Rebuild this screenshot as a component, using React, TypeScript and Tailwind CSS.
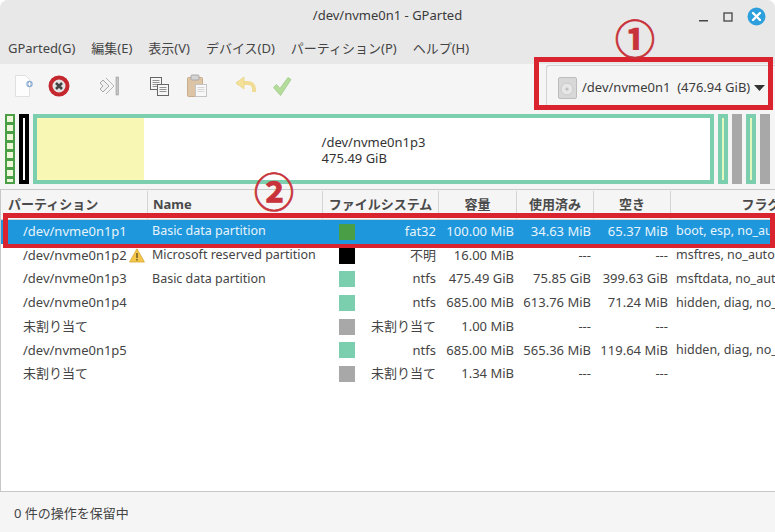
const font = { fontFamily: '"Noto Sans", "Noto Sans CJK JP", sans-serif' };

const rows = [
  { p: "/dev/nvme0n1p1", warn: false, n: "Basic data partition", c: "bg-[#4a9e45]", fs: "fat32", size: "100.00 MiB", used: "34.63 MiB", free: "65.37 MiB", flags: "boot, esp, no_automount" },
  { p: "/dev/nvme0n1p2", warn: true, n: "Microsoft reserved partition", c: "bg-black", fs: "不明", size: "16.00 MiB", used: "---", free: "---", flags: "msftres, no_automount" },
  { p: "/dev/nvme0n1p3", warn: false, n: "Basic data partition", c: "bg-[#7bcfae]", fs: "ntfs", size: "475.49 GiB", used: "75.85 GiB", free: "399.63 GiB", flags: "msftdata, no_automount" },
  { p: "/dev/nvme0n1p4", warn: false, n: "", c: "bg-[#7bcfae]", fs: "ntfs", size: "685.00 MiB", used: "613.76 MiB", free: "71.24 MiB", flags: "hidden, diag, no_automount" },
  { p: "未割り当て", warn: false, n: "", c: "bg-[#a8a8a8]", fs: "未割り当て", size: "1.00 MiB", used: "---", free: "---", flags: "" },
  { p: "/dev/nvme0n1p5", warn: false, n: "", c: "bg-[#7bcfae]", fs: "ntfs", size: "685.00 MiB", used: "565.36 MiB", free: "119.64 MiB", flags: "hidden, diag, no_automount" },
  { p: "未割り当て", warn: false, n: "", c: "bg-[#a8a8a8]", fs: "未割り当て", size: "1.34 MiB", used: "---", free: "---", flags: "" },
];

const cols = "grid grid-cols-[147px_175px_116px_78px_77px_77px_180px]";

function Head({ label, last }: { label: string; last?: boolean }) {
  return (
    <div className={`flex items-center justify-center font-bold text-[13px] text-[#4a4a4a] whitespace-nowrap overflow-hidden ${last ? "" : "border-r border-[#d4d4d4]"}`}>
      {label}
    </div>
  );
}

function Bar({ w, inner }: { w: string; inner: string }) {
  return (
    <div className={`${w} shrink-0 h-full bg-[#7bcfae] p-[4px]`}>
      <div className={`w-full h-full ${inner}`} />
    </div>
  );
}

export default function App() {
  return (
    <div style={font} className="relative w-[775px] h-[532px] overflow-hidden bg-[#f5f5f5] text-[#3c3c3c] flex flex-col rounded-t-[8px]">
      {/* Title bar */}
      <div className="relative h-[34px] shrink-0 bg-[#e8e8e8] flex items-center justify-center pb-[2px] text-[13px] text-[#3a3a3a]">
        /dev/nvme0n1 - GParted
        <div className="absolute right-[9px] top-[7px] flex items-center gap-[14px]">
          <svg width="10" height="18" viewBox="0 0 10 18"><rect x="0" y="12" width="9" height="1.5" fill="#444" /></svg>
          <svg width="10" height="18" viewBox="0 0 10 18"><rect x="1" y="5" width="8" height="8" fill="none" stroke="#444" strokeWidth="1.3" /></svg>
          <svg width="19" height="19" viewBox="0 0 19 19"><circle cx="9.5" cy="9.5" r="9" fill="#2d9fdc" /><path d="M6 6l7 7M13 6l-7 7" stroke="#fff" strokeWidth="2.4" strokeLinecap="round" /></svg>
        </div>
      </div>
      {/* Menu bar */}
      <div className="h-[30px] shrink-0 bg-[#e8e8e8] flex items-center pl-[8px] gap-[16px] text-[13px] text-[#444]">
        <span>GParted(G)</span>
        <span>編集(E)</span>
        <span>表示(V)</span>
        <span>デバイス(D)</span>
        <span>パーティション(P)</span>
        <span>ヘルプ(H)</span>
      </div>
      {/* Toolbar */}
      <div className="h-[46px] shrink-0 flex items-center pl-[14px] pb-[2px]">
        <svg className="mr-[13px]" width="21" height="24" viewBox="0 0 21 24">
          <path d="M1.5 1.5h10l4 4v17h-14z" fill="#fdfdfd" stroke="#e0e0e0" />
          <circle cx="15.5" cy="10" r="3.2" fill="#8fb0d4" />
          <path d="M13.5 10h4M15.5 8v4" stroke="#fff" strokeWidth="1" />
        </svg>
        <svg className="mr-[28px]" width="22" height="22" viewBox="0 0 22 22">
          <circle cx="11" cy="11" r="8.5" fill="#e4e4e4" stroke="#c4282e" strokeWidth="4" />
          <path d="M8 8l6 6M14 8l-6 6" stroke="#444" strokeWidth="2.6" />
        </svg>
        <svg className="mr-[28px]" width="22" height="22" viewBox="0 0 22 22" fill="none">
          <path d="M2 8l3-3 6 6-6 6-3-3 3-3z" stroke="#a8a8a8" fill="#f0f0f0" />
          <path d="M8 3l8 8-8 8" stroke="#b4b4b4" />
          <rect x="18" y="2" width="2.5" height="18" fill="#c4c4c4" stroke="#999" strokeWidth="0.6" />
        </svg>
        <svg className="mr-[16px]" width="22" height="22" viewBox="0 0 22 22" fill="none">
          <rect x="2.5" y="2.5" width="11" height="12" fill="#f6f6f6" stroke="#666" />
          <path d="M4.5 5.5h7M4.5 7.5h7M4.5 9.5h7M4.5 11.5h5" stroke="#777" strokeWidth=".8" />
          <rect x="9.5" y="9.5" width="11" height="11" fill="#f6f6f6" stroke="#666" />
          <path d="M11.5 12.5h7M11.5 14.5h7M11.5 16.5h7" stroke="#777" strokeWidth=".8" />
        </svg>
        <svg className="mr-[26px]" width="22" height="24" viewBox="0 0 22 24" fill="none">
          <rect x="1.5" y="3.5" width="15" height="19" rx="1" fill="#dcc4a4" stroke="#c8ad8c" />
          <rect x="5" y="1" width="8" height="5" rx="1" fill="#d4d4d4" stroke="#aaa" />
          <rect x="9.5" y="10.5" width="11" height="12" fill="#f8f8f8" stroke="#c4c4c4" />
          <path d="M11.5 13.5h7M11.5 15.5h7M11.5 17.5h7" stroke="#ccc" strokeWidth=".8" />
        </svg>
        <svg className="mr-[14px]" width="24" height="20" viewBox="0 0 24 20" fill="none">
          <path d="M3 7h11a6 6 0 0 1 6 6v3" stroke="#f0dc94" strokeWidth="4" />
          <path d="M10 1L2 7l8 6z" fill="#f4e29a" stroke="#e8d488" strokeWidth=".8" />
        </svg>
        <svg width="20" height="21" viewBox="0 0 20 21">
          <path d="M1.5 11.5l3-3 3.5 4L16 1.5l3 2L8.5 19.5z" fill="#b4dc9a" stroke="#9cc884" strokeWidth=".8" />
        </svg>
      </div>
      {/* Device selector */}
      <div className="absolute left-[546px] top-[65px] w-[229px] h-[44px] border-l border-t border-[#d2d2d2] rounded-tl-[3px] flex items-center pl-[11px] text-[13px] text-[#3c3c3c] whitespace-nowrap">
        <svg className="mr-[5px]" width="19" height="22" viewBox="0 0 19 22">
          <rect x=".5" y=".5" width="18" height="21" rx="1.5" fill="#d8d8d8" stroke="#bcbcbc" />
          <circle cx="9" cy="12" r="6" fill="#e6e6e6" stroke="#cacaca" />
          <circle cx="9" cy="12" r="1.6" fill="#c0c0c0" />
        </svg>
        <span>/dev/nvme0n1&nbsp; (476.94 GiB)</span>
        <svg className="ml-[4px]" width="11" height="6" viewBox="0 0 11 6"><path d="M0 0h11L5.5 6z" fill="#333" /></svg>
      </div>
      {/* Graph */}
      <div className="h-[78px] shrink-0 px-[5px] py-[4px] flex gap-[4px]">
        <div className="w-[10px] shrink-0 h-full bg-[#4a9e45] p-[2px]">
          <div className="w-full h-full bg-[repeating-linear-gradient(to_right,#eef8d8_0_2.5px,#4a9e45_2.5px_3.5px,#eef8d8_3.5px_6px)] relative">
            <div className="absolute inset-0 bg-[repeating-linear-gradient(to_bottom,transparent_0_6px,#4a9e45_6px_9px)]" />
          </div>
        </div>
        <div className="w-[10px] shrink-0 h-full bg-black p-[4px]"><div className="w-full h-full bg-white" /></div>
        <div className="w-[681px] shrink-0 h-full bg-[#7bcfae] p-[4px]">
          <div className="relative w-full h-full bg-white flex items-center justify-center pt-[2px]">
            <div className="absolute left-0 top-0 bottom-0 w-[107px] bg-[#f8f8b4]" />
            <div className="relative text-[13px] leading-[16px] text-[#333]">
              <div>/dev/nvme0n1p3</div>
              <div>475.49 GiB</div>
            </div>
          </div>
        </div>
        <Bar w="w-[10px]" inner="bg-[#e4f8c0]" />
        <div className="w-[10px] shrink-0 h-full bg-[#a8a8a8]" />
        <Bar w="w-[10px]" inner="bg-[#e4f8c0]" />
        <div className="w-[10px] shrink-0 h-full bg-[#a8a8a8]" />
      </div>
      {/* Table */}
      <div className="flex-1 min-h-0 border-l border-t border-b border-[#c8c8c8] bg-white overflow-hidden mt-[1px]">
        <div className={`${cols} h-[28px] bg-[#f5f5f5] border-b border-[#d4d4d4] box-content pt-[1px]`}>
          <div className="flex items-center pl-[7px] font-bold text-[13px] text-[#4a4a4a] border-r border-[#d4d4d4]">パーティション</div>
          <div className="flex items-center pl-[5px] font-bold text-[13px] text-[#4a4a4a] border-r border-[#d4d4d4]">Name</div>
          <Head label="ファイルシステム" />
          <Head label="容量" />
          <Head label="使用済み" />
          <Head label="空き" />
          <Head label="フラグ" last />
        </div>
        {rows.map((r, i) => (
          <div key={i} className={`${cols} h-[23.7px] items-center text-[13px] whitespace-nowrap ${i === 0 ? "bg-[#1f97dc] text-[#e8f4fb]" : "text-[#444]"}`}>
            <div className="pl-[22px] flex items-center">
              <span>{r.p}</span>
              {r.warn && (
                <svg className="ml-[2px] shrink-0" width="16" height="15" viewBox="0 0 16 15"><path d="M8 .8L15.4 14H.6z" fill="#f4c64a" stroke="#d9a52e" strokeWidth=".8" /><path d="M8 5v5M8 11v1.6" stroke="#5a4a20" strokeWidth="1.3" /></svg>
              )}
            </div>
            <div className="pl-[4px] text-[12.5px]">{r.n}</div>
            <div className="relative text-right pr-[3px]">
              <span className={`absolute left-[16px] top-1/2 -translate-y-1/2 w-[16px] h-[16px] ${r.c}`} />
              {r.fs}
            </div>
            <div className="text-right pr-[3px]">{r.size}</div>
            <div className="text-right pr-[3px]">{r.used}</div>
            <div className="text-right pr-[3px]">{r.free}</div>
            <div className="pl-[5px] overflow-hidden text-[12.5px]">{r.flags}</div>
          </div>
        ))}
      </div>
      {/* Status bar */}
      <div className="h-[40px] shrink-0 flex items-center pl-[14px] pt-[3px] text-[13px] text-[#444]">0 件の操作を保留中</div>

      {/* Annotations */}
      <div className="absolute left-[534px] top-[57px] w-[239px] h-[53px] border-[5px] border-[#d9232e]" />
      <div className="absolute left-[3px] top-[213px] w-[772px] h-[35px] border-[5px] border-b-[4px] border-[#d9232e]" />
      <div className="absolute left-[613px] top-[17px] w-[44px] h-[44px] flex items-center justify-center text-[40px] font-bold leading-none text-[#c8323a] [-webkit-text-stroke:0.7px_#c8323a]">①</div>
      <div className="absolute left-[252px] top-[170px] w-[44px] h-[44px] flex items-center justify-center text-[40px] font-bold leading-none text-[#c8323a] [-webkit-text-stroke:0.7px_#c8323a]">②</div>
    </div>
  );
}
